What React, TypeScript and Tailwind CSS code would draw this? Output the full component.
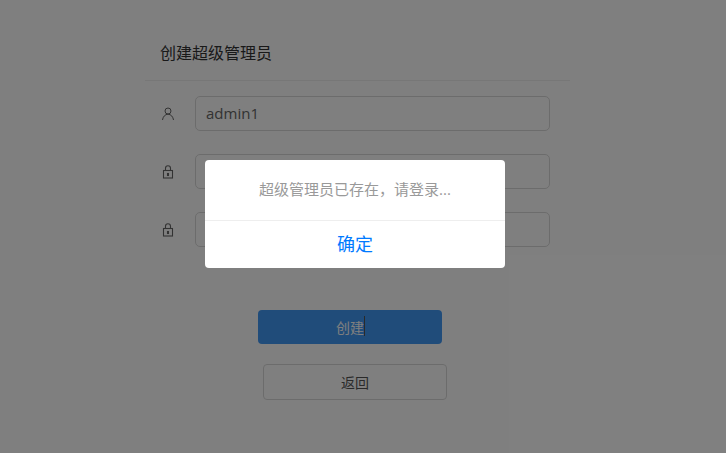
import React from "react";

function UserIcon() {
  return (
    <svg width="14" height="14" viewBox="0 0 14 14" fill="none" stroke="#666" strokeWidth="1">
      <circle cx="7" cy="4" r="3" />
      <path d="M1.500 13c.4-3.200 2.600-5.800 5.500-5.800s5.100 2.600 5.500 5.800" />
    </svg>
  );
}

function LockIcon() {
  return (
    <svg width="14" height="14" viewBox="0 0 14 14" fill="none" stroke="#666" strokeWidth="1.100">
      <rect x="2.500" y="5.500" width="9" height="7.500" />
      <path d="M4.500 5.500V3.300a2.500 2.500 0 0 1 5 0v2.200" />
      <rect x="6.500" y="8.500" width="1" height="2" fill="#666" />
    </svg>
  );
}

function Row({ icon, value }: { icon: React.ReactNode; value?: string }) {
  return (
    <div className="flex items-center h-[35px]">
      <div className="w-[50px] pl-[16px] flex items-center justify-start">{icon}</div>
      <div className="w-[355px] h-[35px] border border-[#d9d9d9] rounded-[5px] pl-[10px] flex items-center text-[15px] text-[#666]">
        {value}
      </div>
    </div>
  );
}

export default function App() {
  return (
    <div
      className="relative w-[726px] h-[453px] overflow-hidden bg-white"
      style={{ fontFamily: '"Open Sans", "Noto Sans CJK SC", sans-serif' }}
    >
      <div className="w-[425px] ml-[145px] flex flex-col">
        <div className="h-[81px] pt-[42px] pl-[15px] border-b border-[#eeeeee] text-[16px] leading-[22px] text-[#333]">
          创建超级管理员
        </div>
        <div className="flex flex-col gap-[23px] pt-[15px]">
          <Row icon={<UserIcon />} value="admin1" />
          <Row icon={<LockIcon />} />
          <Row icon={<LockIcon />} />
        </div>
        <div className="ml-[113px] mt-[63px] w-[184px] h-[34px] rounded-[4px] bg-[#4199f5] flex items-center justify-center text-[14px] text-white">
          <span className="relative">
            创建
            <span className="absolute right-[-1px] top-[-1px] w-px h-[20px] bg-[#555]" />
          </span>
        </div>
        <div className="ml-[118px] mt-[20px] w-[184px] h-[36px] rounded-[4px] border border-[#d9d9d9] flex items-center justify-center text-[14px] text-[#555]">
          返回
        </div>
      </div>

      <div className="absolute inset-0 bg-black/50" />

      <div className="absolute left-[205px] top-[160px] w-[300px] h-[108px] bg-white rounded-[4px] flex flex-col">
        <div className="h-[61px] pb-[2px] border-b border-[#eeeeee] flex items-center justify-center text-[15px] text-[#999]">
          超级管理员已存在，请登录...
        </div>
        <div className="flex-1 flex items-center justify-center text-[18px] text-[#007aff]">确定</div>
      </div>
    </div>
  );
}
